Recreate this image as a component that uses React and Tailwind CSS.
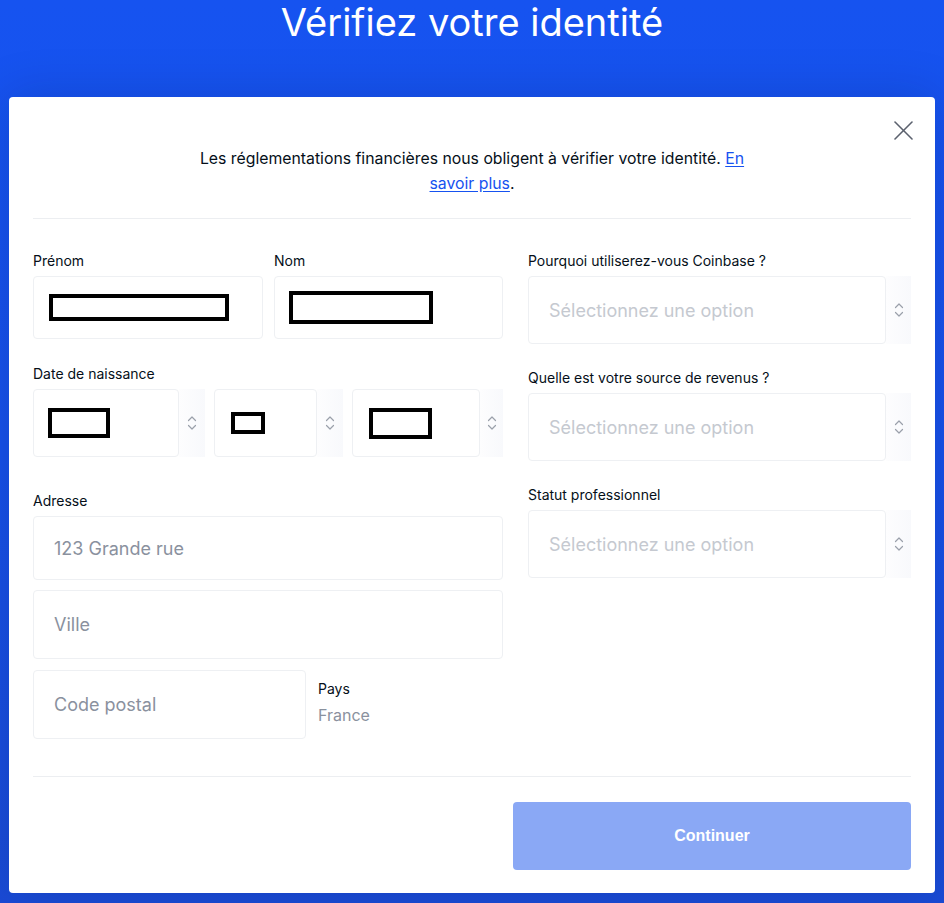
import React from 'react';

const font = { fontFamily: 'Inter, "Noto Sans", sans-serif' };

const Chevrons = () => (
  <svg width="10" height="16" viewBox="0 0 10 16" fill="none" stroke="#9aa0aa" strokeWidth="1.2" strokeLinecap="round" strokeLinejoin="round">
    <polyline points="1.5,5.5 5,2 8.5,5.5" />
    <polyline points="1.5,10.5 5,14 8.5,10.5" />
  </svg>
);

const Redacted = ({ className }) => <div className={`border-4 border-black ${className}`} />;

const Label = ({ children }) => (
  <div className="text-[14px] leading-[16px] text-[#050f19] mb-[7px]">{children}</div>
);

const Box = ({ className = '', children }) => (
  <div className={`border border-[#eef0f3] rounded-[4px] bg-white flex items-center ${className}`}>{children}</div>
);

const SelectBox = ({ h, children, pl, arrowW }) => (
  <div className="flex">
    <Box className={`flex-1 ${h} ${pl}`}>{children}</Box>
    <div className={`${arrowW} bg-linear-to-r from-[#fdfdfe] to-[#f8f9fc] flex items-center justify-center`}>
      <Chevrons />
    </div>
  </div>
);

const OptionSelect = ({ label }) => (
  <div>
    <Label>{label}</Label>
    <SelectBox h="h-[68px]" pl="pl-[20px]" arrowW="w-[25px]">
      <span className="text-[18px] text-[#c5c9d0]">Sélectionnez une option</span>
    </SelectBox>
  </div>
);

export default function App() {
  return (
    <div className="h-[903px] overflow-hidden bg-linear-to-b from-[#1653f0] via-[#1751ea] to-[#1a4bd6] px-[9px]" style={font}>
      <div className="h-[97px] pt-[1px] text-center text-white text-[38px] leading-[42px]">Vérifiez votre identité</div>

      <div className="relative bg-white rounded-[4px] h-[796px] px-[24px] pt-[49px] shadow-[0_0_50px_rgba(10,20,60,0.18)]">
        <button className="absolute right-[22px] top-[24px] w-[19px] h-[19px]">
          <svg width="19" height="19" viewBox="0 0 19 19" stroke="#5b616e" strokeWidth="1.6" strokeLinecap="round">
            <line x1="1" y1="1" x2="18" y2="18" />
            <line x1="18" y1="1" x2="1" y2="18" />
          </svg>
        </button>

        <p className="max-w-[566px] mx-auto text-center text-[15.8px] leading-[25px] text-[#050f19]">
          Les réglementations financières nous obligent à vérifier votre identité.{' '}
          <a className="text-[#1652f0] underline underline-offset-2">En savoir plus</a>.
        </p>

        <div className="h-px bg-[#eceef1] mt-[22px]" />

        <div className="flex gap-[25px] mt-[34px]">
          {/* left column */}
          <div className="w-[470px]">
            <div className="flex gap-[11px]">
              <div className="w-[230px]">
                <Label>Prénom</Label>
                <Box className="h-[63px] pl-[15px]">
                  <Redacted className="w-[180px] h-[27px]" />
                </Box>
              </div>
              <div className="flex-1">
                <Label>Nom</Label>
                <Box className="h-[63px] pl-[14px]">
                  <Redacted className="w-[144px] h-[33px]" />
                </Box>
              </div>
            </div>

            <div className="mt-[27px]">
              <Label>Date de naissance</Label>
              <div className="grid grid-cols-[172px_129px_151px] gap-[9px]">
                <SelectBox h="h-[68px]" pl="pl-[14px]" arrowW="w-[26px]">
                  <Redacted className="w-[62px] h-[30px]" />
                </SelectBox>
                <SelectBox h="h-[68px]" pl="pl-[16px]" arrowW="w-[26px]">
                  <Redacted className="w-[34px] h-[22px]" />
                </SelectBox>
                <SelectBox h="h-[68px]" pl="pl-[16px]" arrowW="w-[23px]">
                  <Redacted className="w-[63px] h-[31px]" />
                </SelectBox>
              </div>
            </div>

            <div className="mt-[36px]">
              <Label>Adresse</Label>
              <Box className="h-[64px] pl-[20px]">
                <span className="text-[18px] text-[#8a919e]">123 Grande rue</span>
              </Box>
              <Box className="h-[69px] pl-[20px] mt-[10px]">
                <span className="text-[18px] text-[#8a919e]">Ville</span>
              </Box>
              <div className="flex mt-[11px]">
                <Box className="w-[273px] h-[69px] pl-[20px]">
                  <span className="text-[18px] text-[#8a919e]">Code postal</span>
                </Box>
                <div className="pl-[12px] pt-[11px]">
                  <div className="text-[14px] leading-[16px] text-[#050f19]">Pays</div>
                  <div className="text-[16px] leading-[20px] mt-[8px] text-[#8a919e]">France</div>
                </div>
              </div>
            </div>
          </div>

          {/* right column */}
          <div className="flex-1 flex flex-col gap-[26px]">
            <OptionSelect label="Pourquoi utiliserez-vous Coinbase ?" />
            <OptionSelect label="Quelle est votre source de revenus ?" />
            <OptionSelect label="Statut professionnel" />
          </div>
        </div>

        <div className="h-px bg-[#eceef1] mt-[37px]" />

        <div className="flex justify-end mt-[25px]">
          <button
            className="w-[398px] h-[68px] rounded-[4px] bg-[#8aa8f5] text-white text-[16px] font-bold"
            style={{ fontFamily: '"Liberation Sans", Arial, sans-serif' }}
          >
            Continuer
          </button>
        </div>
      </div>
    </div>
  );
}
